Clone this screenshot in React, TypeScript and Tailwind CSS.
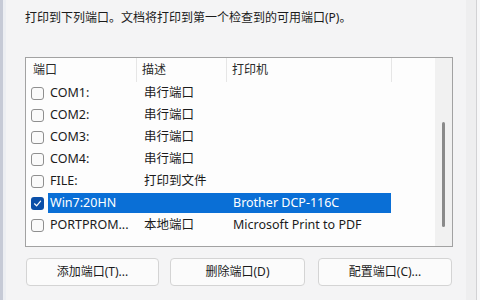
import React from "react";

const FONT = "font-['Noto_Sans','Noto_Sans_CJK_SC',sans-serif]";

interface PortRow {
  port: string;
  desc: string;
  printer: string;
  checked?: boolean;
  selected?: boolean;
}

const rows: PortRow[] = [
  { port: "COM1:", desc: "串行端口", printer: "" },
  { port: "COM2:", desc: "串行端口", printer: "" },
  { port: "COM3:", desc: "串行端口", printer: "" },
  { port: "COM4:", desc: "串行端口", printer: "" },
  { port: "FILE:", desc: "打印到文件", printer: "" },
  { port: "Win7:20HN", desc: "", printer: "Brother DCP-116C", checked: true, selected: true },
  { port: "PORTPROM...", desc: "本地端口", printer: "Microsoft Print to PDF" },
];

function CheckBox({ checked }: { checked?: boolean }) {
  if (checked) {
    return (
      <div className="flex h-[13px] w-[13px] shrink-0 items-center justify-center rounded-[3px] bg-[#0a4fa8]">
        <svg width="9" height="9" viewBox="0 0 9 9" fill="none">
          <path d="M1.5 4.8 L3.6 6.8 L7.6 2.2" stroke="#ffffff" strokeWidth="1.2" strokeLinecap="round" strokeLinejoin="round" />
        </svg>
      </div>
    );
  }
  return <div className="h-[13px] w-[13px] shrink-0 rounded-[3px] border border-[#8f8f8f] bg-[#fafafa]" />;
}

function Row({ row }: { row: PortRow }) {
  return (
    <div className="flex h-[22px] items-center pl-[5px]">
      <CheckBox checked={row.checked} />
      <div
        className={`ml-[4px] flex h-[20px] w-[343px] items-center text-[12.5px] ${
          row.selected ? "bg-[#0a6fd6] text-white" : "text-[#1b1b1b]"
        }`}
      >
        <span className="w-[96px] pl-[2px] whitespace-nowrap">{row.port}</span>
        <span className="w-[89px] whitespace-nowrap">{row.desc}</span>
        <span className="whitespace-nowrap">{row.printer}</span>
      </div>
    </div>
  );
}

export default function App() {
  return (
    <div className={`flex h-[300px] w-[480px] overflow-hidden bg-[#f4f4f5] ${FONT}`}>
      {/* window edge on the left */}
      <div className="w-[3px] bg-[#c6cad6]" />
      <div className="w-[3px] bg-[#eceef2]" />

      <div className="flex w-[460px] flex-col pl-[19px]">
        <p className="mt-[9px] h-[18px] text-[12px] leading-[18px] text-[#1b1b1b]">
          打印到下列端口。文档将打印到第一个检查到的可用端口(P)。
        </p>

        {/* port list */}
        <div className="mt-[30px] flex h-[190px] w-[428px] border border-[#a2a2a2] bg-[#fdfdfd]">
          <div className="flex flex-1 flex-col">
            <div className="flex h-[24px] shrink-0 items-center text-[12px] text-[#2a2a2a]">
              <div className="flex h-full w-[111px] items-center border-r border-[#e6e6e6] pl-[7px]">端口</div>
              <div className="flex h-full w-[90px] items-center border-r border-[#e6e6e6] pl-[5px]">描述</div>
              <div className="flex h-full w-[165px] items-center border-r border-[#e6e6e6] pl-[5px]">打印机</div>
            </div>
            {rows.map((r) => (
              <Row key={r.port} row={r} />
            ))}
          </div>
          {/* scrollbar */}
          <div className="flex w-[17px] shrink-0 justify-center bg-[#f1f1f1] pt-[64px]">
            <div className="h-[105px] w-[3px] rounded-full bg-[#8a8a8a]" />
          </div>
        </div>

        {/* buttons */}
        <div className="mt-[11px] flex gap-[11px] pl-[1px] text-[12px] text-[#1b1b1b]">
          <button className="flex h-[28px] w-[133px] items-center justify-center rounded-[4px] border border-[#d4d4d4] bg-[#fbfbfb]">
            添加端口(T)...
          </button>
          <button className="flex h-[28px] w-[135px] items-center justify-center rounded-[4px] border border-[#d4d4d4] bg-[#fbfbfb]">
            删除端口(D)
          </button>
          <button className="ml-[2px] flex h-[28px] w-[134px] items-center justify-center rounded-[4px] border border-[#d4d4d4] bg-[#fbfbfb]">
            配置端口(C)...
          </button>
        </div>
      </div>

      {/* window edge on the right */}
      <div className="w-[10px] bg-[#eeeeef]" />
      <div className="w-[1px] bg-[#d2d2d4]" />
      <div className="flex-1 bg-[#f8f8f9]" />
    </div>
  );
}
